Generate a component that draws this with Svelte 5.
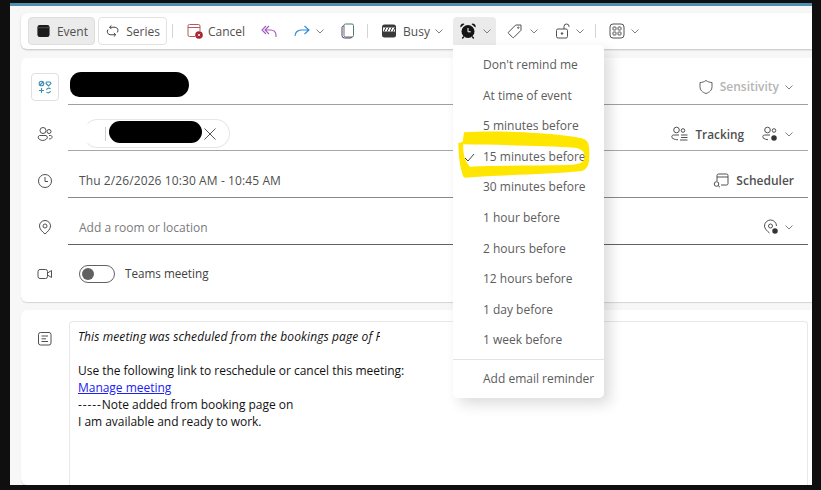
<script lang="ts">
  const reminders = [
    "Don't remind me",
    "At time of event",
    "5 minutes before",
    "15 minutes before",
    "30 minutes before",
    "1 hour before",
    "2 hours before",
    "12 hours before",
    "1 day before",
    "1 week before",
  ];
  const selected = "15 minutes before";
</script>

{#snippet chevron()}
  <svg class="chev" width="10" height="10" viewBox="0 0 10 10" fill="none" stroke="#808080" stroke-width="1"><path d="M1.5 3.5 5 7l3.500-3.500"/></svg>
{/snippet}

<div class="frame">
  <div class="window">
    <div class="toolbar">
      <button class="tab active">
        <svg width="16" height="16" viewBox="0 0 16 16"><rect x="1.500" y="1.500" width="13" height="13" rx="2.500" fill="#1b1b1b"/><path d="M1.500 4.500h13" stroke="#777" stroke-width=".6"/></svg>
        <span>Event</span>
      </button>
      <button class="tab series">
        <svg width="16" height="16" viewBox="0 0 16 16" fill="none" stroke="#333" stroke-width="1.100"><path d="M4.500 3.500h6.500a3.800 3.800 0 0 1 2.500 6.300M11.500 12.500H5a3.800 3.800 0 0 1-2.500-6.300M6.500 1.300 4.300 3.500l2.200 2.200M9.500 14.700l2.200-2.200-2.200-2.200"/></svg>
        <span>Series</span>
      </button>
      <i class="sep first"></i>
      <div class="tool cancel">
        <svg width="16" height="16" viewBox="0 0 16 16" fill="none"><path d="M8 13.500H2.500A1.500 1.500 0 0 1 1 12V3a1.500 1.500 0 0 1 1.500-1.500h9A1.500 1.500 0 0 1 13 3v5M1 4.500h12" stroke="#b35a5a"/><circle cx="12" cy="12" r="3.800" fill="#a8232c"/><path d="M10.800 10.800l2.400 2.400m0-2.400-2.400 2.400" stroke="#fff" stroke-width=".8"/></svg>
        <span>Cancel</span>
      </div>
      <svg class="reply" width="16" height="16" viewBox="0 0 16 16" fill="none" stroke="#a45bbd" stroke-width="1.100"><path d="M5 3 1 7l4 4M8 3 4 7l4 4M4 7h6a5 5 0 0 1 5 5v2"/></svg>
      <svg class="forward" width="16" height="16" viewBox="0 0 16 16" fill="none" stroke="#2b88d8" stroke-width="1.100"><path d="M10.500 3 15 7l-4.500 4M15 7H7a6 6 0 0 0-6 6"/></svg>
      {@render chevron()}
      <svg class="copy" width="14" height="16" viewBox="0 0 14 16" fill="none" stroke="#55785f" stroke-width="1"><rect x="3" y="1" width="9.500" height="13" rx="1.500"/><path d="M3 3H2.500A1.500 1.500 0 0 0 1 4.500v8A2.500 2.500 0 0 0 3.500 15h6a1.500 1.500 0 0 0 1.500-1" stroke="#553a78"/></svg>
      <i class="sep second"></i>
      <div class="tool busy">
        <svg width="16" height="16" viewBox="0 0 16 16"><rect x="1" y="1.500" width="14" height="13" rx="2.500" fill="#3a3a3a"/><rect x="2" y="4.500" width="12" height="4" fill="#fff"/><path d="M3 8.500l2-4M6 8.500l2-4M9 8.500l2-4M12 8.500l2-4" stroke="#3a3a3a"/></svg>
        <span>Busy</span>
        {@render chevron()}
      </div>
      <div class="tool alarm">
        <svg width="16" height="16" viewBox="0 0 16 16"><circle cx="8" cy="8.500" r="6.500" fill="#141414"/><path d="M8 5v3.800h2.800" fill="none" stroke="#fff" stroke-width="1"/><path d="M.6 4.500A2.800 2.800 0 0 1 4.600 1zM15.400 4.500A2.800 2.800 0 0 0 11.400 1z" fill="#141414"/><path d="M3.800 13.500l-1.500 2M12.200 13.500l1.500 2" stroke="#141414" stroke-width="1.300"/></svg>
        {@render chevron()}
      </div>
      <div class="tool tag">
        <svg width="16" height="16" viewBox="0 0 16 16" fill="none" stroke="#505050"><path d="M1.500 9.200 8.700 2H14v5.300l-7.200 7.200a.8.8 0 0 1-1.100 0l-4.200-4.200a.8.8 0 0 1 0-1.100z"/><circle cx="11.300" cy="4.700" r=".7"/></svg>
        {@render chevron()}
      </div>
      <div class="tool lock">
        <svg width="16" height="16" viewBox="0 0 16 16" fill="none" stroke="#505050"><rect x="1.500" y="6" width="11" height="9" rx="1.500"/><path d="M9 6V3.500a2.500 2.500 0 0 1 5 0V4"/><circle cx="7" cy="10.500" r=".8" fill="#505050"/></svg>
        {@render chevron()}
      </div>
      <i class="sep third"></i>
      <div class="tool apps">
        <svg width="16" height="16" viewBox="0 0 16 16" fill="none" stroke="#505050"><rect x="1" y="1" width="14" height="14" rx="3"/><rect x="4" y="4" width="3" height="3" rx=".6"/><rect x="9" y="4" width="3" height="3" rx=".6"/><rect x="4" y="9" width="3" height="3" rx=".6"/><rect x="9" y="9" width="3" height="3" rx=".6"/></svg>
        {@render chevron()}
      </div>
    </div>

    <div class="card form">
      <div class="row">
        <div class="lead">
          <div class="category">
            <svg width="14" height="14" viewBox="0 0 14 14" fill="none" stroke="#3d8eb0" stroke-width="1.100"><circle cx="3.500" cy="3.500" r="2.300"/><path d="M2 5l3-3M8.500 2h3.500l1 1.500L10.500 6 8 3.500zM1 10.500h5M3.500 8v5M8.500 10a2.300 2.300 0 0 1 4-1M12.500 11a2.300 2.300 0 0 1-4 1"/></svg>
          </div>
        </div>
        <div class="field title">
          <span class="grow"></span>
          <svg class="side-icon" width="16" height="16" viewBox="0 0 16 16" fill="none" stroke="#616161"><path d="M8 1.500c1.800 1.300 3.700 2 6 2v4.200c0 3.300-2.200 5.500-6 6.800-3.800-1.300-6-3.500-6-6.800V3.500c2.300 0 4.200-.7 6-2z"/></svg>
          <span class="muted">Sensitivity</span>
          {@render chevron()}
        </div>
      </div>
      <div class="row">
        <div class="lead">
          <svg width="16" height="16" viewBox="0 0 16 16" fill="none" stroke="#505050"><circle cx="6" cy="4.500" r="3"/><path d="M2.500 9.500h6.500a2 2 0 0 1 .5 3.500 6 6 0 0 1-7.500 0 2 2 0 0 1 .5-3.500z"/><circle cx="12" cy="5.500" r="2"/><path d="M12 9.500h1.500a1.500 1.500 0 0 1 1 2.700c-.7.500-1.500.8-2.500.8"/></svg>
        </div>
        <div class="field people">
          <div class="pill">
            <i class="tick"></i>
            <span class="grow"></span>
            <svg width="12" height="12" viewBox="0 0 12 12" stroke="#555" stroke-width="1"><path d="M.5.500l11 11m0-11-11 11"/></svg>
          </div>
          <span class="grow"></span>
          <svg width="17" height="16" viewBox="0 0 17 16" fill="none" stroke="#505050"><circle cx="5.500" cy="4" r="2.800"/><path d="M8 9H2.500A1.800 1.800 0 0 0 2 12.500c1.500 1 3 1.300 5 1.200"/><circle cx="12" cy="4.500" r="1.800"/><path d="M10 9h6.500M10 11.500h6.500M9 14h7.500"/></svg>
          <span class="strong tracking">Tracking</span>
          <svg class="gear-people" width="17" height="16" viewBox="0 0 17 16" fill="none" stroke="#505050"><circle cx="5.500" cy="4" r="2.800"/><path d="M8 9H2.500A1.800 1.800 0 0 0 2 12.500c1 .7 2.200 1.100 4 1.200"/><circle cx="12" cy="4.500" r="1.800"/><circle cx="12" cy="12" r="2" fill="#333" stroke-width="1.500" stroke="#333"/></svg>
          {@render chevron()}
        </div>
      </div>
      <div class="row">
        <div class="lead">
          <svg width="16" height="16" viewBox="0 0 16 16" fill="none" stroke="#505050"><circle cx="8" cy="8" r="6.500"/><path d="M8 4v4.500h3"/></svg>
        </div>
        <div class="field">
          <span class="value date">Thu 2/26/2026 10:30 AM - 10:45 AM</span>
          <span class="grow"></span>
          <svg width="16" height="16" viewBox="0 0 16 16" fill="none" stroke="#505050"><path d="M4 9V3.500A1.500 1.500 0 0 1 5.500 2h8A1.500 1.500 0 0 1 15 3.500v8a1.500 1.500 0 0 1-1.500 1.500H8M4 5h11"/><circle cx="3.500" cy="12" r="2.300"/><path d="M5.200 13.700 7 15.300"/></svg>
          <span class="strong scheduler">Scheduler</span>
        </div>
      </div>
      <div class="row">
        <div class="lead">
          <svg width="16" height="16" viewBox="0 0 16 16" fill="none" stroke="#505050"><path d="M8 15c-3-2.600-5.500-5-5.500-8a5.500 5.500 0 0 1 11 0c0 3-2.500 5.400-5.500 8z"/><circle cx="8" cy="7" r="2"/></svg>
        </div>
        <div class="field dark">
          <span class="placeholder">Add a room or location</span>
          <span class="grow"></span>
          <svg class="gear-pin" width="16" height="16" viewBox="0 0 16 16" fill="none" stroke="#505050"><path d="M6.500 14C4 12 1.500 9.500 1.500 7a6 6 0 0 1 12 0"/><circle cx="7.500" cy="7" r="2"/><circle cx="12" cy="12" r="2" fill="#333" stroke="#333" stroke-width="1.500"/></svg>
          {@render chevron()}
        </div>
      </div>
      <div class="row">
        <div class="lead">
          <svg width="16" height="16" viewBox="0 0 16 16" fill="none" stroke="#505050"><rect x="1" y="3.500" width="9.500" height="9" rx="2"/><path d="M10.500 7 14.500 4.500v7L10.500 9"/></svg>
        </div>
        <div class="teams">
          <span class="toggle"><i></i></span>
          <span class="value dark-text">Teams meeting</span>
        </div>
      </div>
    </div>

    <div class="card body">
      <div class="lead note">
        <svg width="14" height="14" viewBox="0 0 14 14" fill="none" stroke="#505050"><rect x=".5" y=".5" width="12.500" height="12.500" rx="2"/><path d="M3.500 4h6.500M3.500 6.800h4.500M3.500 9.500h6.500"/></svg>
      </div>
      <div class="editor">
        <em>This meeting was scheduled from the bookings page of F</em>
        <br />
        <br />
        Use the following link to reschedule or cancel this meeting:
        <br />
        <a href="#manage">Manage meeting</a>
        <br />
        <span class="dashes">-----</span>Note added from booking page on
        <br />
        I am available and ready to work.
      </div>
    </div>
  </div>

  <div class="cover cover-a"></div>
  <div class="cover cover-b"></div>

  <div class="menu">
    {#each reminders as item}
      <div class="item">
        {#if item === selected}
          <svg class="check" width="11" height="11" viewBox="0 0 11 11" fill="none" stroke="#424242" stroke-width="1"><path d="M1 6l3 3 6-7"/></svg>
        {/if}
        {item}
      </div>
    {/each}
    <hr />
    <div class="item email">Add email reminder</div>
  </div>

  <svg class="marker" width="150" height="60" viewBox="0 0 450 180">
    <path fill="#ffe600" fill-rule="evenodd" d="M42 22C150 15 330 25 395 40 415 45 418 60 418 80 418 110 418 130 395 138 300 148 150 150 45 158L40 155C30 130 25 90 25 55L38 50ZM40 58C150 60 300 62 375 68 400 72 405 85 403 100 400 115 385 118 360 120 250 122 120 122 60 125 45 110 38 85 40 58Z" />
  </svg>

  <div class="blob blob-title"></div>
  <div class="blob blob-person"></div>
</div>

<style>
  :global(body) {
    margin: 0;
    font-family: "Open Sans", "Noto Sans", sans-serif;
  }

  .frame {
    position: relative;
    width: 821px;
    height: 490px;
    box-sizing: border-box;
    padding: 3px 9px 5px 10px;
    background: #0f0f0f;
    overflow: hidden;
  }

  .window {
    display: flex;
    flex-direction: column;
    height: 100%;
    box-sizing: border-box;
    padding: 7px 0 0 11px;
    background: #f7f7f7;
    border-top: 3px solid #508faf;
    overflow: hidden;
  }

  .toolbar {
    display: flex;
    align-items: center;
    flex: none;
    height: 36px;
    padding-left: 7px;
    background: #fff;
    border-radius: 6px 0 0 6px;
    box-shadow: 0 1px 2px rgba(0, 0, 0, 0.22);
    font-size: 12px;
    color: #505050;
  }

  .tab {
    display: flex;
    align-items: center;
    gap: 6px;
    box-sizing: border-box;
    height: 28px;
    padding: 0 6px 0 7px;
    border: 1px solid #e2e2e2;
    border-radius: 4px;
    background: #fff;
    font: inherit;
    color: inherit;
  }

  .tab.active {
    width: 67px;
    background: #ebebeb;
    border-color: #dedede;
  }

  .tab.series {
    width: 69px;
    margin-left: 3px;
    gap: 7px;
  }

  .sep {
    width: 1px;
    height: 14px;
    background: #d4d4d4;
  }

  .sep.first { margin: 0 14px 0 5px; }
  .sep.second { margin: 0 14px 0 12px; }
  .sep.third { margin: 0 13px 0 10px; }

  .tool {
    display: flex;
    align-items: center;
  }

  .cancel { gap: 5px; }
  .reply { margin-left: 16px; }
  .forward { margin: 0 5px 0 17px; }
  .copy { margin-left: 16px; }
  .busy { gap: 6px; margin-left: -1px; }
  .busy .chev { margin-left: -2px; }

  .alarm {
    box-sizing: border-box;
    width: 43px;
    height: 28px;
    margin-left: 9px;
    padding-left: 7px;
    gap: 6px;
    background: #ebebeb;
    border-radius: 4px 4px 0 0;
  }

  .tag { margin-left: 11px; gap: 6px; }
  .lock { margin-left: 16px; gap: 4px; }
  .apps { gap: 5px; }

  .card {
    background: #fff;
    border-radius: 6px 0 0 6px;
    box-shadow: 0 1px 1px rgba(0, 0, 0, 0.14);
  }

  .form {
    flex: none;
    height: 244px;
    margin-top: 9px;
    box-sizing: border-box;
  }

  .row {
    display: flex;
    height: 46.700px;
    padding-top: 12px;
    box-sizing: border-box;
  }

  .lead {
    display: flex;
    flex: none;
    align-items: center;
    justify-content: center;
    width: 47px;
  }

  .category {
    display: flex;
    align-items: center;
    justify-content: center;
    width: 26px;
    height: 26px;
    border: 1px solid #e0e0e0;
    border-radius: 4px;
  }

  .field {
    display: flex;
    flex: 1;
    align-items: center;
    margin-right: 4px;
    padding: 0 14px 0 11px;
    border-bottom: 1px solid #8a8a8a;
    font-size: 12px;
  }

  .field.title { border-bottom-color: #a0a0a0; }
  .field.people { padding-left: 15px; border-bottom-color: #a8a8a8; }
  .field.dark { border-bottom-color: #616161; }

  .grow { flex: 1; }

  .side-icon { margin-right: 6px; }

  .muted {
    margin-right: 5px;
    font-weight: 600;
    color: #b5b5b5;
  }

  .pill {
    display: flex;
    align-items: center;
    box-sizing: border-box;
    width: 147px;
    height: 29px;
    padding: 0 13px 0 21px;
    border: 1px solid #e6e6e6;
    border-left-color: transparent;
    border-radius: 15px;
  }

  .tick {
    width: 1px;
    height: 14px;
    background: #cfcfcf;
  }

  .strong {
    font-weight: 600;
    color: #505050;
  }

  .tracking { margin-left: 7px; font-size: 11.800px; }
  .gear-people { margin: 0 5px 0 18px; }
  .scheduler { margin-left: 7px; }
  .gear-pin { margin-right: 5px; }

  .value {
    color: #505050;
  }

  .date { letter-spacing: 0.1px; }

  .dark-text {
    color: #424242;
    margin: -2px 0 0 10px;
    font-size: 11.700px;
  }

  .placeholder {
    margin-top: 2px;
    color: #7a7a7a;
  }

  .teams {
    display: flex;
    align-items: center;
    padding-left: 11px;
  }

  .toggle {
    display: flex;
    align-items: center;
    box-sizing: border-box;
    width: 36px;
    height: 18px;
    padding-left: 2px;
    border: 1px solid #616161;
    border-radius: 9px;
  }

  .toggle i {
    width: 12px;
    height: 12px;
    border-radius: 50%;
    background: #616161;
  }

  .body {
    display: flex;
    flex: 1;
    min-height: 0;
    margin-top: 8px;
    padding-top: 11px;
  }

  .note {
    align-items: flex-start;
    width: 48px;
    padding-top: 11px;
  }

  .editor {
    flex: 1;
    margin-right: 4px;
    padding: 6px 8px;
    border: 1px solid #e8e8e8;
    border-bottom: none;
    border-radius: 4px 4px 0 0;
    font-size: 12px;
    line-height: 17px;
    letter-spacing: -0.03px;
    color: #111;
  }

  .editor em {
    letter-spacing: 0.1px;
  }

  .editor a {
    color: #2020f0;
  }

  .dashes {
    letter-spacing: 0.9px;
  }

  .cover {
    position: absolute;
    background: #fff;
  }

  .cover-a {
    left: 380px;
    top: 324px;
    width: 73px;
    height: 24px;
  }

  .cover-b {
    left: 296px;
    top: 396px;
    width: 251px;
    height: 22px;
  }

  .menu {
    position: absolute;
    left: 453px;
    top: 45px;
    width: 151px;
    height: 353px;
    box-sizing: border-box;
    padding-top: 5px;
    background: #fff;
    border-radius: 0 5px 5px 5px;
    box-shadow: 6px 6px 14px rgba(0, 0, 0, 0.14);
    font-size: 12px;
    color: #5c5c5c;
  }

  .item {
    position: relative;
    height: 30.600px;
    line-height: 30.600px;
    padding-left: 30px;
    white-space: nowrap;
  }

  .check {
    position: absolute;
    left: 11px;
    top: 10px;
  }

  .menu hr {
    margin: 3px 0 0;
    border: none;
    border-top: 1px solid #e3e3e3;
  }

  .email {
    margin-top: 4px;
  }

  .marker {
    position: absolute;
    left: 450px;
    top: 125px;
  }

  .blob {
    position: absolute;
    background: #000;
  }

  .blob-title {
    left: 70px;
    top: 72px;
    width: 119px;
    height: 25px;
    border-radius: 12px 14px 13px 10px;
  }

  .blob-person {
    left: 109px;
    top: 121px;
    width: 93px;
    height: 22px;
    border-radius: 11px;
  }
</style>
